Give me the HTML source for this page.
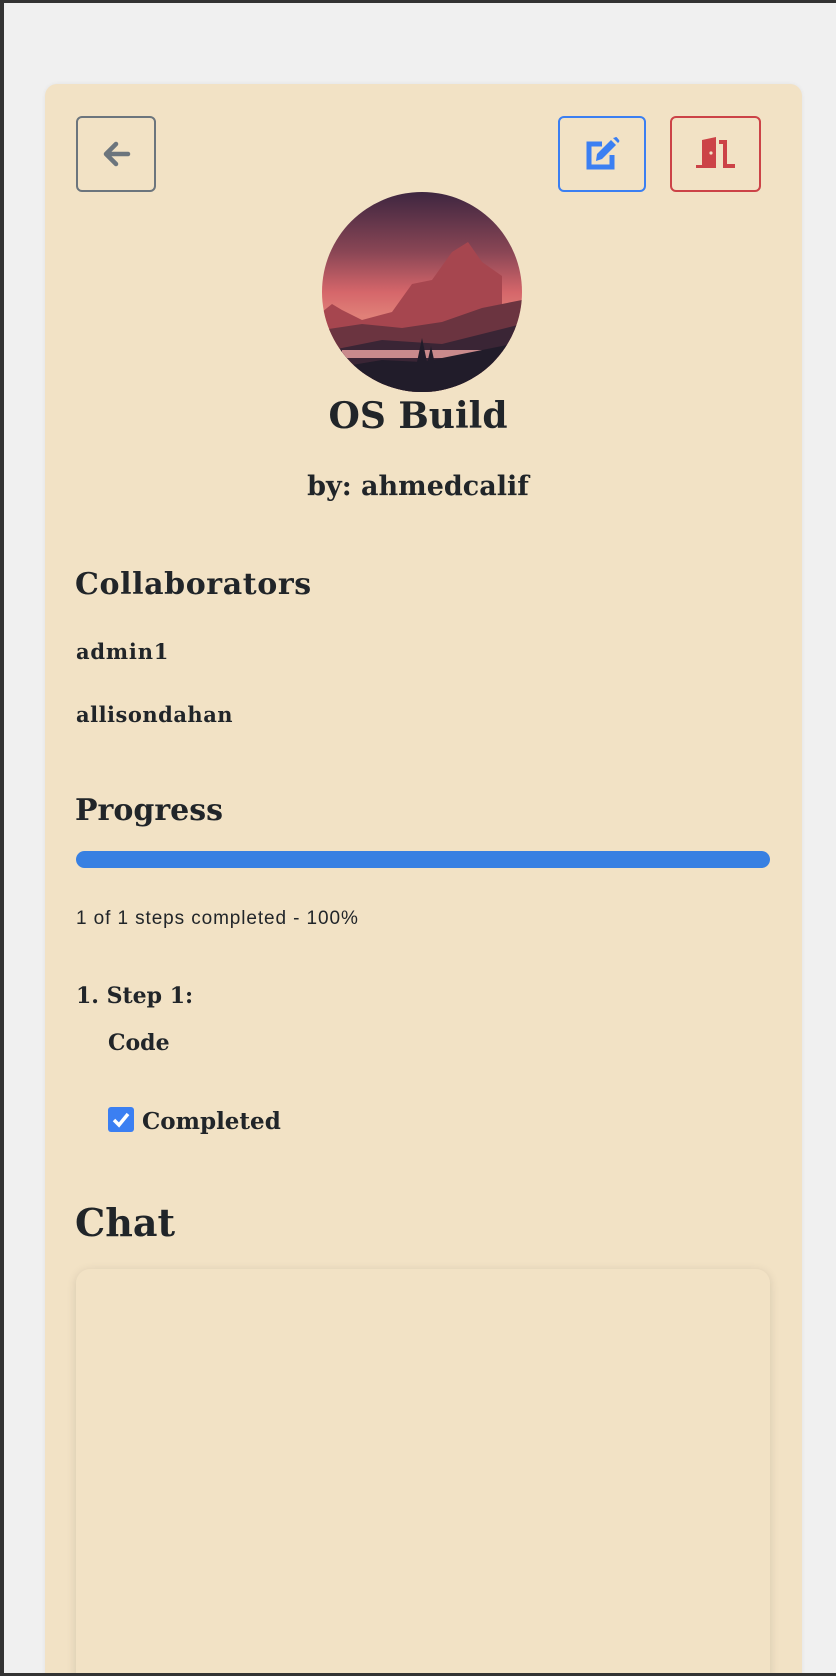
<!DOCTYPE html>
<html><head><meta charset="utf-8"><style>
html,body{margin:0;padding:0;overflow:hidden;width:836px;height:1676px}
body{background:#f0f0f0;position:relative;font-family:"DejaVu Serif","Liberation Serif",serif;color:#212529;font-weight:bold}
.frame{position:absolute;left:0;top:0;width:836px;height:1676px;box-sizing:border-box;border-left:4px solid #333;border-top:3px solid #333;border-bottom:3px solid #333;pointer-events:none;z-index:5}
.card{position:absolute;left:45px;top:84px;width:757px;height:1592px;background:#f2e2c5;border-radius:12px 12px 0 0;box-shadow:0 0 4px rgba(0,0,0,0.06)}
.btn{position:absolute;box-sizing:border-box;border:2px solid;border-radius:6px;display:flex;align-items:center;justify-content:center}
.t{position:absolute;white-space:nowrap;margin:0}
.avatar{position:absolute;left:322px;top:192px;width:200px;height:200px;border-radius:50%;overflow:hidden}
</style></head><body>
<div class="frame"></div>
<div class="card"></div>
<div class="btn" style="left:76px;top:116px;width:80px;height:76px;border-color:#6c757d">
<svg width="30" height="28" viewBox="0 0 30 28"><path d="M27 14H6M15 4L5 14l10 10" fill="none" stroke="#6c757d" stroke-width="4.5" stroke-linecap="round" stroke-linejoin="round"/></svg></div>
<div class="btn" style="left:558px;top:116px;width:88px;height:76px;border-color:#3b7ff2">
<svg width="38" height="36" viewBox="0 0 38 36"><path d="M19 8H6v23h23V19" fill="none" stroke="#3b7ff2" stroke-width="5"/><path d="M13 25l1-7L28 4l5 5-14 14z" fill="#3b7ff2"/><path d="M30 2l5 5 1-1a1.5 1.5 0 0 0 0-2l-2-2.5a1.5 1.5 0 0 0-2 0z" fill="#3b7ff2"/></svg></div>
<div class="btn" style="left:670px;top:116px;width:91px;height:76px;border-color:#cc4347">
<svg width="42" height="34" viewBox="0 0 42 34"><path d="M1 28h6V3l14-3v31H1z" fill="#cc4347"/><circle cx="16" cy="16" r="1.6" fill="#f2e2c5"/><path d="M24 5h6v24h10" fill="none" stroke="#cc4347" stroke-width="4"/></svg></div>
<div class="avatar"><svg width="200" height="200" viewBox="0 0 200 200">
<defs><linearGradient id="sky" x1="0" y1="0" x2="0" y2="1"><stop offset="0" stop-color="#3e2640"/><stop offset="0.3" stop-color="#8a4655"/><stop offset="0.5" stop-color="#d5666a"/><stop offset="0.62" stop-color="#e08078"/></linearGradient></defs>
<rect width="200" height="200" fill="url(#sky)"/>
<path d="M0 120l10-8 10 6 20 10 30-8 20-28 20-4 20-28 16-10 14 20 20 14v100H0z" fill="#a6464f"/>
<path d="M0 138l40-6 40 4 40-6 40-14 40-8v100H0z" fill="#6b3440"/>
<path d="M0 160l60-12 60 4 80-20v80H0z" fill="#3a2535"/>
<rect x="20" y="158" width="160" height="8" fill="#c98a8c"/>
<path d="M0 178l60-10 40 2 100-20v60H0z" fill="#211c2a"/>
<path d="M95 170l5-24 5 24zM105 172l4-18 4 18z" fill="#211c2a"/>
</svg></div>
<p class="t" style="left:0;width:836px;text-align:center;top:395px;font-size:36px">OS Build</p>
<p class="t" style="left:0;width:836px;text-align:center;top:471px;font-size:27px">by: ahmedcalif</p>
<p class="t" style="left:75px;top:567px;font-size:30px;letter-spacing:0.6px">Collaborators</p>
<p class="t" style="left:76px;top:639px;font-size:21px;letter-spacing:0.8px">admin1</p>
<p class="t" style="left:76px;top:702px;font-size:21px;letter-spacing:0.5px">allisondahan</p>
<p class="t" style="left:75px;top:793px;font-size:30px">Progress</p>
<div style="position:absolute;left:76px;top:851px;width:694px;height:17px;border-radius:9px;background:#3880e2"></div>
<p class="t" style="left:76px;top:908px;font-size:19px;letter-spacing:0.9px;font-weight:normal;font-family:'Liberation Sans',sans-serif">1 of 1 steps completed - 100%</p>
<p class="t" style="left:76px;top:983px;font-size:22px">1. Step 1:</p>
<p class="t" style="left:108px;top:1030px;font-size:22px">Code</p>
<div style="position:absolute;left:108px;top:1107px;width:26px;height:25px;background:#3b7ff2;border-radius:3px"><svg width="26" height="25" viewBox="0 0 26 25"><path d="M6 13l5 5 9-11" fill="none" stroke="#fff" stroke-width="3.5"/></svg></div>
<p class="t" style="left:142px;top:1108px;font-size:23px">Completed</p>
<p class="t" style="left:75px;top:1200px;font-size:38px">Chat</p>
<div style="position:absolute;left:76px;top:1269px;width:694px;height:440px;background:#f2e2c5;border-radius:14px;box-shadow:0 2px 10px rgba(0,0,0,0.12)"></div>
</body></html>
